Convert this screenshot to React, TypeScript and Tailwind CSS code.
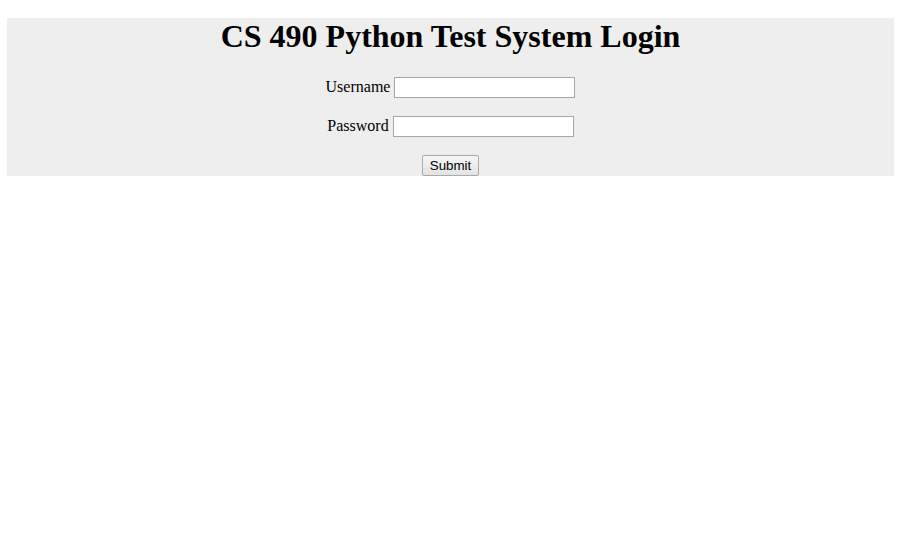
export default function App() {
  return (
    <div className="min-h-screen bg-white pt-[18px] pl-[7px] pr-[8px] font-['Liberation_Serif',serif] text-black">
      <div className="bg-[#eeeeee] text-center pb-0">
        <h1 className="text-[32px] font-bold leading-[37px] mb-[21px]">CS 490 Python Test System Login</h1>
        <form className="flex flex-col gap-[16px]" onSubmit={(e) => e.preventDefault()}>
          <div className="h-[23px] flex items-center justify-center gap-[4px] text-[16px]">
            <label htmlFor="username" className="mb-[2px]">Username</label>
            <input
              id="username"
              type="text"
              className="w-[181px] h-[21px] bg-white border border-[#a7a7a7] px-[2px] text-[13px] font-['Liberation_Sans',sans-serif]"
            />
          </div>
          <div className="h-[23px] flex items-center justify-center gap-[4px] text-[16px]">
            <label htmlFor="password" className="mb-[2px]">Password</label>
            <input
              id="password"
              type="password"
              className="w-[181px] h-[21px] bg-white border border-[#a7a7a7] px-[2px] text-[13px] font-['Liberation_Sans',sans-serif]"
            />
          </div>
          <div className="h-[22px] flex items-start justify-center">
            <button
              type="submit"
              className="mt-[1px] w-[57px] h-[21px] bg-gradient-to-b from-[#f6f6f6] to-[#e3e3e3] border border-[#a9a9a9] rounded-[2px] text-[13.33px] leading-none text-black font-['Liberation_Sans',sans-serif]"
            >
              Submit
            </button>
          </div>
        </form>
      </div>
    </div>
  );
}
